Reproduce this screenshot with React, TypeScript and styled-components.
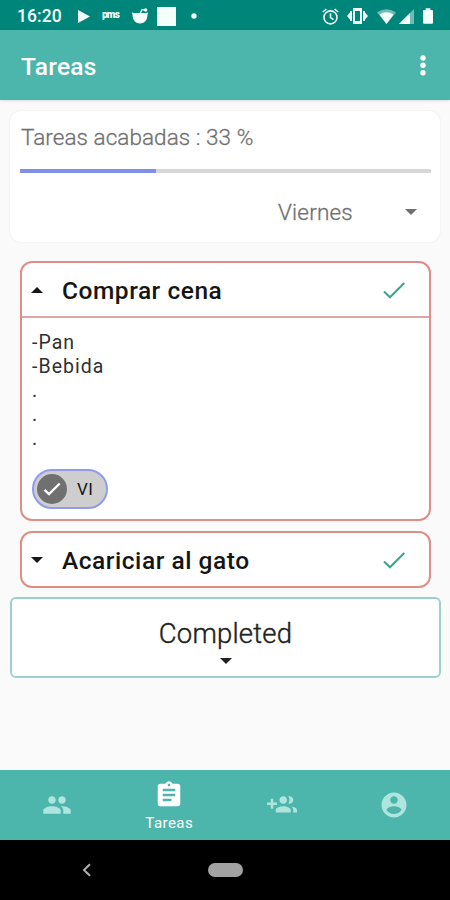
import React from "react";
import styled, { createGlobalStyle } from "styled-components";

const GlobalStyle = createGlobalStyle`
  * { box-sizing: border-box; }
  body { margin: 0; background: #fafafa; font-family: Roboto, sans-serif; }
`;

const Screen = styled.div`
  display: flex;
  flex-direction: column;
  width: 450px;
  height: 900px;
  overflow: hidden;
  background: #fafafa;
`;

const StatusBar = styled.header`
  display: flex;
  align-items: center;
  justify-content: space-between;
  height: 30px;
  padding: 2px 17px 0 17px;
  background: #00857a;
  color: #f4fffd;
`;

const StatusGroup = styled.div`
  display: flex;
  align-items: center;
`;

const Clock = styled.span`
  width: 61px;
  font-size: 17.5px;
  font-weight: 500;
  line-height: 26px;
  letter-spacing: 0.1px;
`;

const Icon = styled.svg<{ $w: number; $h?: number; $gap?: number }>`
  display: block;
  flex: none;
  width: ${(p) => p.$w}px;
  height: ${(p) => p.$h ?? p.$w}px;
  margin-left: ${(p) => p.$gap ?? 0}px;
  fill: currentColor;
`;

const PmsMark = styled.span`
  width: 19px;
  margin-left: 12px;
  font-size: 10px;
  font-weight: 900;
  line-height: 10px;
  letter-spacing: -0.8px;
  transform: translateY(-1px);
`;

const AppBar = styled.div`
  display: flex;
  flex: none;
  align-items: center;
  justify-content: space-between;
  height: 70px;
  padding: 2px 12px 0 21px;
  background: #4db6ac;
  box-shadow: 0 1px 3px rgba(0, 0, 0, 0.12);
  color: #fff;
`;

const Title = styled.h1`
  margin: 0;
  font-size: 24.5px;
  font-weight: 500;
  letter-spacing: 0.3px;
`;

const Content = styled.main`
  flex: 1;
  padding: 11px 9px 0 10px;
`;

const Summary = styled.section`
  height: 131px;
  margin-right: 1px;
  padding: 10px 9px 0 10px;
  border-radius: 11px;
  background: #fff;
  box-shadow: 0 0 2px rgba(0, 0, 0, 0.1);
  color: #707070;
`;

const SummaryText = styled.div`
  padding-left: 1px;
  font-size: 22.5px;
  line-height: 32px;
  font-weight: 300;
  letter-spacing: 0.05px;
  -webkit-text-stroke: 0.3px currentColor;
`;

const Track = styled.div`
  height: 4px;
  margin-top: 16px;
  border-radius: 1px;
  background: #d7d7d7;
`;

const Progress = styled.div`
  height: 100%;
  background: #7f8fea;
`;

const DayPicker = styled.div`
  display: flex;
  align-items: center;
  justify-content: space-between;
  width: 139px;
  height: 30px;
  margin: 24px 14px 0 auto;
  font-size: 22.5px;
  font-weight: 300;
  letter-spacing: 0.2px;
  -webkit-text-stroke: 0.3px currentColor;
`;

const TaskList = styled.div`
  display: grid;
  gap: 10px;
  margin: 19px 10px 9px;
`;

const TaskCard = styled.article`
  border: 2px solid #de8e87;
  border-radius: 12px;
  background: #fff;
  color: #151515;
`;

const TaskHeader = styled.div`
  display: flex;
  align-items: center;
  height: 53px;
  padding: 1px 23px 0 9px;
`;

const TaskTitle = styled.h2`
  flex: 1;
  margin: 0 0 0 19px;
  font-size: 24.5px;
  font-weight: 500;
  letter-spacing: 0.53px;
`;

const TaskBody = styled.div`
  height: 203px;
  padding: 13px 10px 0;
  border-top: 2px solid #dda8a3;
`;

const Line = styled.div`
  height: 24px;
  font-size: 19.5px;
  line-height: 24px;
  letter-spacing: 1.05px;
  color: #303030;
`;

const Chip = styled.div`
  display: flex;
  align-items: center;
  width: 76px;
  height: 40px;
  margin-top: 18px;
  padding-left: 3px;
  border: 2px solid #909bed;
  border-radius: 20px;
  background: #cecece;
  font-size: 17px;
  letter-spacing: 0.5px;
`;

const ChipMark = styled.span`
  display: grid;
  place-items: center;
  width: 30px;
  height: 30px;
  margin-right: 10px;
  border-radius: 50%;
  background: #707070;
  color: #fff;
`;

const Completed = styled.section`
  display: flex;
  flex-direction: column;
  align-items: center;
  gap: 7px;
  height: 81px;
  padding-top: 18px;
  border: 2px solid #9bd1cd;
  border-radius: 6px;
  background: #fff;
  color: #222;
  font-size: 27.5px;
  font-weight: 300;
  line-height: 34px;
  letter-spacing: 0.2px;
  -webkit-text-stroke: 0.4px currentColor;
`;

const BottomNav = styled.nav`
  display: grid;
  grid-template-columns: repeat(4, 1fr);
  height: 70px;
  background: #4db6ac;
`;

const NavItem = styled.div<{ $active?: boolean }>`
  display: flex;
  flex-direction: column;
  align-items: center;
  padding-top: ${(p) => (p.$active ? 10 : 20)}px;
  padding-left: 1px;
  color: ${(p) => (p.$active ? "#fff" : "#afe5df")};
`;

const NavLabel = styled.span`
  font-size: 15px;
  line-height: 18px;
  margin-top: 4px;
  letter-spacing: 0.45px;
`;

const SystemNav = styled.footer`
  display: grid;
  grid-template-columns: 174px 102px 174px;
  place-items: center;
  height: 60px;
  background: #000;
  color: #b0b0b0;
`;

const HomePill = styled.div`
  width: 35px;
  height: 14px;
  border-radius: 7px;
  background: #a2a2a2;
`;

const Arrow = ({ up = false }: { up?: boolean }) => (
  <Icon $w={12} $h={6} viewBox="0 0 12 6">
    <path d={up ? "M0 6 6 0l6 6z" : "M0 0h12L6 6z"} />
  </Icon>
);

const Tick = ({ size, width }: { size: number; width: number }) => (
  <Icon $w={size} $h={size * 0.75} viewBox="0 0 24 18">
    <path d="M2 10.5 8 16.2 22.3 2" fill="none" stroke="currentColor" strokeWidth={width} />
  </Icon>
);

const Accept = styled.span`
  color: #3aa890;
`;

const Task = ({ title, open, children }: { title: string; open?: boolean; children?: React.ReactNode }) => (
  <TaskCard>
    <TaskHeader>
      <Arrow up={open} />
      <TaskTitle>{title}</TaskTitle>
      <Accept><Tick size={24} width={2.1} /></Accept>
    </TaskHeader>
    {open && <TaskBody>{children}</TaskBody>}
  </TaskCard>
);

const navItems = [
  { path: "M16 11c1.66 0 2.99-1.34 2.99-3S17.66 5 16 5s-3 1.34-3 3 1.34 3 3 3zm-8 0c1.66 0 2.99-1.34 2.99-3S9.66 5 8 5 5 6.34 5 8s1.34 3 3 3zm0 2c-2.33 0-7 1.17-7 3.5V19h14v-2.5c0-2.33-4.67-3.5-7-3.5zm8 0c-.29 0-.62.02-.97.05 1.16.84 1.97 1.97 1.97 3.45V19h6v-2.5c0-2.33-4.67-3.5-7-3.5z" },
  { label: "Tareas", path: "M19 3h-4.18C14.4 1.84 13.3 1 12 1s-2.4.84-2.82 2H5c-1.1 0-2 .9-2 2v14c0 1.1.9 2 2 2h14c1.1 0 2-.9 2-2V5c0-1.1-.9-2-2-2zm-7 0c.55 0 1 .45 1 1s-.45 1-1 1-1-.45-1-1 .45-1 1-1zm2 14H7v-2h7v2zm3-4H7v-2h10v2zm0-4H7V7h10v2z" },
  { path: "M8 10H5V7H3v3H0v2h3v3h2v-3h3v-2zm10 1c1.66 0 2.99-1.34 2.99-3S19.66 5 18 5c-.32 0-.63.05-.91.14.57.81.9 1.79.9 2.86s-.34 2.04-.9 2.86c.28.09.59.14.91.14zm-5 0c1.66 0 2.99-1.34 2.99-3S14.66 5 13 5s-3 1.34-3 3 1.34 3 3 3zm6.62 2.16c.83.73 1.38 1.66 1.38 2.84v2h3v-2c0-1.54-2.37-2.49-4.38-2.84zM13 13c-2 0-6 1-6 3v2h12v-2c0-2-4-3-6-3z" },
  { path: "M12 2C6.48 2 2 6.48 2 12s4.48 10 10 10 10-4.48 10-10S17.52 2 12 2zm0 3c1.66 0 3 1.34 3 3s-1.34 3-3 3-3-1.34-3-3 1.34-3 3-3zm0 14.2c-2.5 0-4.71-1.28-6-3.22.03-1.99 4-3.08 6-3.08s5.97 1.09 6 3.08c-1.29 1.94-3.5 3.22-6 3.22z" },
];

const progress = 33;

export default function App() {
  return (
    <>
      <GlobalStyle />
      <Screen>
        <StatusBar>
          <StatusGroup>
            <Clock>16:20</Clock>
            <Icon $w={12} $h={13} viewBox="0 0 12 13"><path d="M0 0 12 6.5 0 13z" /></Icon>
            <PmsMark>pms</PmsMark>
            <Icon $w={18} $h={16} $gap={10} viewBox="0 0 18 16">
              <path d="M1.5 6.5C0 5 1.4 4 2.5 5h13c1.1-1 2.5 0 1 1.5C16.5 12.5 13 15.5 9 15.5S1.5 12.5 1.5 6.5z" />
              <path d="M9 5.5 11 1.6l3 .4" fill="none" stroke="currentColor" strokeWidth="1.3" />
              <circle cx="14.6" cy="2" r="1.7" />
            </Icon>
            <Icon $w={19} $gap={8} viewBox="0 0 19 19"><path d="M0 0h19v19H0z" /></Icon>
            <Icon $w={6} $gap={15} viewBox="0 0 6 6"><circle cx="3" cy="3" r="2.7" /></Icon>
          </StatusGroup>
          <StatusGroup>
            <Icon $w={17} $h={17} viewBox="0 0 17 17">
              <g fill="none" stroke="currentColor" strokeWidth="1.6">
                <circle cx="8.5" cy="9.4" r="6.5" />
                <path d="M8.5 5.3v4.3l3 2M.8 4 4.4 1M16.2 4l-3.6-3" />
              </g>
            </Icon>
            <Icon $w={21} $h={16} $gap={8} viewBox="0 0 21 16">
              <path d="M6 0h9v16H6zM8 3v10h5V3z" fillRule="evenodd" />
              <path d="M3 3h2v10H3zM16 3h2v10h-2zM0 8l3-3.5v7zM21 8l-3-3.5v7z" />
            </Icon>
            <Icon $w={19} $h={15} $gap={9} viewBox="0 0 19 15">
              <path opacity=".45" d="M0 3.5Q9.5-3 19 3.5L9.5 15z" />
              <path d="M2.5 5.5Q9.5 1 16.5 5.5L9.5 15z" />
            </Icon>
            <Icon $w={15} $h={15} $gap={3} viewBox="0 0 15 15">
              <path opacity=".45" d="M0 15 15 0v15z" />
              <path d="M0 15 11 4v11z" />
            </Icon>
            <Icon $w={10} $h={16} $gap={9} viewBox="0 0 11 17"><path d="M3 0h5v2h2q1 0 1 1v13q0 1-1 1H1q-1 0-1-1V3q0-1 1-1h2z" /></Icon>
          </StatusGroup>
        </StatusBar>
        <AppBar>
          <Title>Tareas</Title>
          <Icon $w={30} viewBox="0 0 30 30">
            <circle cx="15" cy="7" r="2.7" /><circle cx="15" cy="14.3" r="2.7" /><circle cx="15" cy="21.8" r="2.7" />
          </Icon>
        </AppBar>
        <Content>
          <Summary>
            <SummaryText>Tareas acabadas : {progress} %</SummaryText>
            <Track><Progress style={{ width: `${progress}%` }} /></Track>
            <DayPicker>Viernes <Arrow /></DayPicker>
          </Summary>
          <TaskList>
            <Task title="Comprar cena" open>
              {["-Pan", "-Bebida", ".", ".", "."].map((line, i) => <Line key={i}>{line}</Line>)}
              <Chip><ChipMark><Tick size={18} width={3} /></ChipMark>VI</Chip>
            </Task>
            <Task title="Acariciar al gato" />
          </TaskList>
          <Completed>
            Completed
            <Arrow />
          </Completed>
        </Content>
        <BottomNav>
          {navItems.map(({ path, label }) => (
            <NavItem key={path} $active={!!label}>
              <Icon $w={30} viewBox="0 0 24 24"><path d={path} /></Icon>
              {label && <NavLabel>{label}</NavLabel>}
            </NavItem>
          ))}
        </BottomNav>
        <SystemNav>
          <Icon $w={10} $h={14} viewBox="0 0 10 14"><path d="M8 1.2 2 7l6 5.8" fill="none" stroke="currentColor" strokeWidth="2" /></Icon>
          <HomePill />
        </SystemNav>
      </Screen>
    </>
  );
}
